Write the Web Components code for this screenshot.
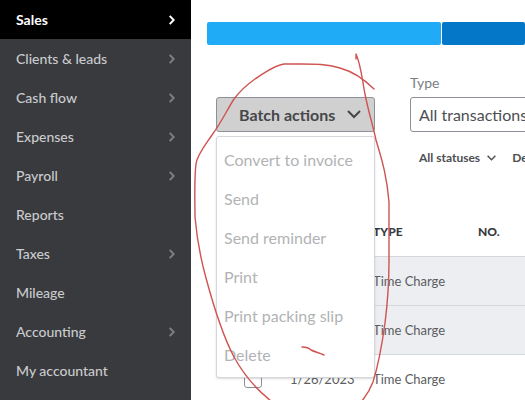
<!DOCTYPE html>
<html lang="en">
<head>
<meta charset="utf-8">
<meta name="viewport" content="width=device-width, initial-scale=1">
<title>Sales transactions</title>
<style>
  body { margin: 0; font-family: Lato, "Open Sans", sans-serif; font-size: 14px; color: #393a3d; background: #fff; }
</style>
</head>
<body>
<sales-page></sales-page>

<script>
class NavItem extends HTMLElement {
  constructor() {
    super();
    this.attachShadow({ mode: 'open' });
    this.shadowRoot.innerHTML = `
      <style>
        :host { display: block; color: #c9cbce; font-weight: 500; }
        a {
          display: flex;
          align-items: center;
          justify-content: space-between;
          height: 39px;
          padding: 0 16px;
          color: inherit;
          text-decoration: none;
        }
        svg { display: none; width: 6px; height: 10px; color: #7d8083; }
        :host([expandable]) svg { display: block; }
        :host([active]) { background: #000; color: #fff; font-weight: 700; }
        :host([active]) svg { color: #fff; }
      </style>
      <a href="#"><slot></slot>
        <svg viewBox="0 0 6 10" fill="none" stroke="currentColor" stroke-width="2" aria-hidden="true"><path d="M.7.9 4.7 5 .7 9.1"/></svg>
      </a>
    `;
  }
}

class SideNav extends HTMLElement {
  constructor() {
    super();
    this.attachShadow({ mode: 'open' });
    this.shadowRoot.innerHTML = `
      <style>
        :host { display: block; background: #393a3d; }
      </style>
      <nav aria-label="Main"><slot></slot></nav>
    `;
  }
}

class MoneyBar extends HTMLElement {
  constructor() {
    super();
    this.attachShadow({ mode: 'open' });
    this.shadowRoot.innerHTML = `
      <style>
        :host { display: flex; gap: 1px; height: 23px; }
        span { flex: none; width: 234px; border-radius: 2px; background: #1fabf5; }
        span:last-child { flex: 1; background: #0577c9; }
      </style>
      <span></span><span></span>
    `;
  }
}

class BatchMenu extends HTMLElement {
  constructor() {
    super();
    this.attachShadow({ mode: 'open' });
    this.shadowRoot.innerHTML = `
      <style>
        :host { display: block; position: relative; width: 159px; }
        .trigger {
          display: flex;
          align-items: center;
          justify-content: space-between;
          box-sizing: border-box;
          width: 100%;
          height: 35px;
          padding: 0 13px 0 22px;
          border: 1px solid #8d9096;
          border-radius: 3px;
          background: #d0d0d1;
          color: #46474a;
          font: inherit;
          font-size: 16px;
          font-weight: 700;
        }
        svg { width: 14px; height: 9px; }
        .menu {
          position: absolute;
          top: 100%;
          left: 0;
          right: 0;
          z-index: 1;
          margin-top: 4px;
          padding: 3px 0;
          border: 1px solid #d4d7dc;
          border-radius: 3px;
          background: #fff;
          box-shadow: 0 1px 2px rgba(0, 0, 0, 0.15);
        }
        .menu button {
          display: block;
          width: 100%;
          height: 39px;
          padding: 0 7px;
          border: 0;
          background: none;
          color: #b1b3b5;
          font: inherit;
          font-size: 16px;
          text-align: left;
          white-space: nowrap;
        }
      </style>
      <button class="trigger" type="button" aria-haspopup="menu" aria-expanded="true">
        <slot></slot>
        <svg viewBox="0 0 14 9" fill="none" stroke="currentColor" stroke-width="2" aria-hidden="true"><path d="m1 1 6 6 6-6"/></svg>
      </button>
      <div class="menu" role="menu"></div>
    `;
  }

  connectedCallback() {
    const menu = this.shadowRoot.querySelector('.menu');
    const trigger = this.shadowRoot.querySelector('.trigger');
    const actions = ['Convert to invoice', 'Send', 'Send reminder', 'Print', 'Print packing slip', 'Delete'];
    menu.innerHTML = actions.map(a => `<button type="button" role="menuitem" disabled>${a}</button>`).join('');
    trigger.addEventListener('click', () => {
      menu.hidden = !menu.hidden;
      menu.style.display = menu.hidden ? 'none' : '';
      trigger.setAttribute('aria-expanded', String(!menu.hidden));
    });
  }
}

class TypeSelect extends HTMLElement {
  constructor() {
    super();
    this.attachShadow({ mode: 'open' });
    this.shadowRoot.innerHTML = `
      <style>
        :host { display: block; }
        label { display: block; height: 22px; line-height: 16px; color: #7b7e83; }
        select {
          appearance: none;
          box-sizing: border-box;
          width: 100%;
          height: 35px;
          padding: 0 8px;
          border: 1px solid #8d9096;
          border-radius: 3px;
          background: #fff;
          color: #4c4e52;
          font: inherit;
          font-size: 16px;
        }
      </style>
      <label for="type">Type</label>
      <select id="type"><option>All transactions</option></select>
    `;
  }
}

class FilterButton extends HTMLElement {
  constructor() {
    super();
    this.attachShadow({ mode: 'open' });
    this.shadowRoot.innerHTML = `
      <style>
        :host { display: block; flex: none; }
        button {
          display: flex;
          align-items: center;
          gap: 7px;
          padding: 0;
          border: 0;
          background: none;
          color: #4c4e52;
          font: inherit;
          font-size: 12px;
          font-weight: 700;
          line-height: 16px;
          white-space: nowrap;
        }
        svg { width: 9px; height: 6px; }
      </style>
      <button type="button"><slot></slot>
        <svg viewBox="0 0 9 6" fill="none" stroke="currentColor" stroke-width="1.4" aria-hidden="true"><path d="m.6.7 3.9 4 3.9-4"/></svg>
      </button>
    `;
  }
}

class TransactionTable extends HTMLElement {
  constructor() {
    super();
    this.attachShadow({ mode: 'open' });
    this.shadowRoot.innerHTML = `
      <style>
        :host { display: block; }
        table { width: 100%; table-layout: fixed; border-collapse: collapse; font-size: 13px; color: #5b5d61; }
        th, td { box-sizing: border-box; height: 49px; padding: 0; text-align: left; white-space: nowrap; }
        th { font-size: 12px; font-weight: 900; color: #393a3d; }
        tr { border-bottom: 1px solid #d4d7dc; }
        tr.shaded { background: #eceef2; }
        .check { width: 74px; padding-left: 28px; }
        .date { width: 83px; }
        .type { width: 105px; }
        input {
          appearance: none;
          display: block;
          box-sizing: border-box;
          width: 18px;
          height: 18px;
          margin: 0;
          border: 1px solid #8d9096;
          border-radius: 3px;
          background: #fff;
        }
      </style>
      <table>
        <thead>
          <tr><th class="check"></th><th class="date"></th><th class="type">TYPE</th><th>NO.</th></tr>
        </thead>
        <tbody></tbody>
      </table>
    `;
  }

  connectedCallback() {
    const rows = [
      { date: '', type: 'Time Charge', shaded: true },
      { date: '', type: 'Time Charge', shaded: true },
      { date: '1/26/2023', type: 'Time Charge', shaded: false },
    ];
    this.shadowRoot.querySelector('tbody').innerHTML = rows.map(r => `
      <tr class="${r.shaded ? 'shaded' : ''}">
        <td class="check"><input type="checkbox" aria-label="Select row"></td>
        <td class="date">${r.date}</td>
        <td class="type">${r.type}</td>
        <td></td>
      </tr>`).join('');
  }
}

// red freehand loop drawn over the page
class InkMarks extends HTMLElement {
  constructor() {
    super();
    this.attachShadow({ mode: 'open' });
    this.shadowRoot.innerHTML = `
      <style>
        :host { display: block; pointer-events: none; }
        svg { display: block; overflow: hidden; }
      </style>
      <svg width="200" height="350" viewBox="192 50 200 350" fill="none" stroke="#cf5350" stroke-width="1.4" stroke-linecap="round" stroke-linejoin="round" aria-hidden="true">
        <path d="M374 89C364 79 354 72 340 68C327 64 315 64 301 64H284C275 65 264 73 255 79C245 86 237 95 234 99C227 110 221 123 212 135C206 144 197 155 196 164C194 181 195 204 195 217C197 240 201 260 206 278C213 304 223 336 234 357C244 375 257 390 271 401"/>
        <path d="M356 59V54C361 65 362 79 365 94C368 110 373 126 376 140C383 163 387 178 389 202V260C389 282 388 300 385 323C382 345 378 366 373 382C370 390 366 396 362 401"/>
        <path d="M302 347C305 347 308 347 311 350C315 352 320 353 324 355"/>
      </svg>
    `;
  }
}

class SalesPage extends HTMLElement {
  constructor() {
    super();
    this.attachShadow({ mode: 'open' });
    this.shadowRoot.innerHTML = `
      <style>
        :host {
          display: grid;
          grid-template-columns: 191px minmax(0, 1fr);
          position: relative;
          height: 100vh;
          overflow: hidden;
        }
        main { padding: 22px 0 0 16px; overflow: hidden; }
        .content { padding-left: 9px; }
        .toolbar { display: flex; align-items: flex-end; gap: 35px; margin-top: 30px; }
        batch-menu { flex: none; }
        type-select { flex: none; width: 200px; }
        .filters { display: flex; gap: 16px; margin: 18px 0 41px 203px; }
        ink-marks { position: absolute; top: 50px; left: 192px; z-index: 2; }
      </style>
      <side-nav>
        <nav-item active expandable>Sales</nav-item>
        <nav-item expandable>Clients &amp; leads</nav-item>
        <nav-item expandable>Cash flow</nav-item>
        <nav-item expandable>Expenses</nav-item>
        <nav-item expandable>Payroll</nav-item>
        <nav-item>Reports</nav-item>
        <nav-item expandable>Taxes</nav-item>
        <nav-item>Mileage</nav-item>
        <nav-item expandable>Accounting</nav-item>
        <nav-item>My accountant</nav-item>
      </side-nav>
      <main>
        <money-bar></money-bar>
        <div class="content">
          <div class="toolbar">
            <batch-menu>Batch actions</batch-menu>
            <type-select></type-select>
          </div>
          <div class="filters">
            <filter-button>All statuses</filter-button>
            <filter-button>Delivery method</filter-button>
          </div>
          <transaction-table></transaction-table>
        </div>
      </main>
      <ink-marks></ink-marks>
    `;
  }
}

customElements.define('nav-item', NavItem);
customElements.define('side-nav', SideNav);
customElements.define('money-bar', MoneyBar);
customElements.define('batch-menu', BatchMenu);
customElements.define('type-select', TypeSelect);
customElements.define('filter-button', FilterButton);
customElements.define('transaction-table', TransactionTable);
customElements.define('ink-marks', InkMarks);
customElements.define('sales-page', SalesPage);
</script>
</body>
</html>
